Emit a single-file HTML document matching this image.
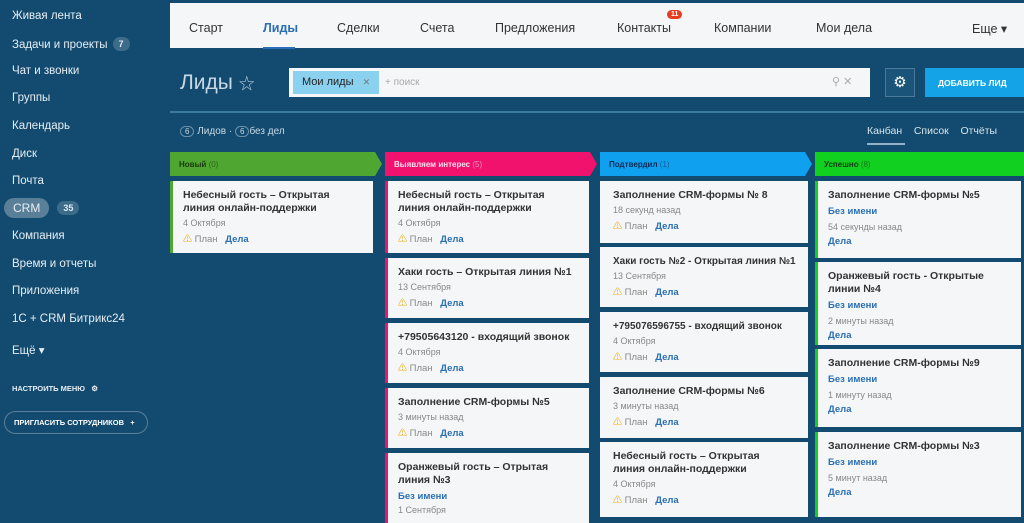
<!DOCTYPE html>
<html><head><meta charset="utf-8"><style>
*{margin:0;padding:0;box-sizing:border-box}
body{width:1024px;height:512px;overflow:hidden;background:#124b6f;font-family:"Liberation Sans","Noto Sans CJK SC",sans-serif;position:relative;color:#333}
.sb{position:absolute;left:12px;color:#e6eef4;font-size:11.5px}
.bd{display:inline-block;background:#3d6b8a;color:#dfe9f0;border-radius:9px;font-size:9px;font-weight:bold;padding:2px 6px;margin-left:5px;vertical-align:1px}
.top{position:absolute;left:170px;top:3px;width:854px;height:45px;background:#f4f6f8}
.top span{position:absolute;top:18px;font-size:12.5px;color:#333}
.hdr{position:absolute;top:152px;height:24px;font-size:8px;font-weight:bold;padding:8px 0 0 9px;color:#1a3a10}
.hdr i{font-style:normal;font-weight:normal;opacity:.6}
.c{position:absolute;background:#f5f6f7;border-left:3px solid;padding:8px 10px 0 10px;font-size:10.5px;overflow:hidden}
.c b{display:block;font-weight:bold;color:#333;line-height:13px}
.c .d{font-size:9px;color:#888;margin-top:3px}
.c .p{font-size:9.5px;color:#888;margin-top:4px}
.c .p em{font-style:normal;color:#f0b020;font-size:9px}
.c .p a,.c .l{color:#2a6fb5;font-weight:bold;margin-left:5px}
.c .l{display:block;margin:4px 0 0 0;font-size:9.5px}
.g .d{margin-top:5px}
.t{white-space:nowrap}
</style></head><body>
<div class="sb" style="top:10px">Живая лента</div>
<div class="sb" style="top:37px">Задачи и проекты<span class="bd">7</span></div>
<div class="sb" style="top:65px">Чат и звонки</div>
<div class="sb" style="top:92px">Группы</div>
<div class="sb" style="top:120px">Календарь</div>
<div class="sb" style="top:148px">Диск</div>
<div class="sb" style="top:175px">Почта</div>
<div class="sb" style="top:201px;left:4px"><span style="background:#5a7f98;border-radius:12px;padding:3px 9px;font-size:12px">CRM</span><span class="bd" style="margin-left:8px">35</span></div>
<div class="sb" style="top:230px">Компания</div>
<div class="sb" style="top:258px">Время и отчеты</div>
<div class="sb" style="top:285px">Приложения</div>
<div class="sb" style="top:313px">1С + CRM Битрикс24</div>
<div class="sb" style="top:343px">Ещё ▾</div>
<div class="sb" style="top:384px;font-size:7.5px;font-weight:bold">НАСТРОИТЬ МЕНЮ &nbsp;&nbsp;⚙</div>
<div style="position:absolute;left:4px;top:411px;width:144px;height:23px;border:1px solid #5a7f98;border-radius:12px;color:#fff;font-size:7.5px;font-weight:bold;padding:6px 0 0 9px">ПРИГЛАСИТЬ СОТРУДНИКОВ &nbsp;&nbsp;+</div>

<div class="top">
<span style="left:19px">Старт</span>
<span style="left:93px;color:#2a6fb5;font-weight:bold">Лиды</span>
<div style="position:absolute;left:93px;top:44px;width:32px;height:2px;background:#2a6fb5"></div>
<span style="left:167px">Сделки</span>
<span style="left:250px">Счета</span>
<span style="left:325px">Предложения</span>
<span style="left:447px">Контакты</span>
<div style="position:absolute;left:497px;top:7px;background:#e63b1f;color:#fff;font-size:7px;border-radius:6px;padding:1px 4px;font-weight:bold">11</div>
<span style="left:544px">Компании</span>
<span style="left:646px">Мои дела</span>
<span style="left:802px">Еще ▾</span>
</div>

<div style="position:absolute;left:180px;top:70px;font-size:21px;color:#c9d9e4;font-weight:300">Лиды <span style="font-size:16px">☆</span></div>
<div style="position:absolute;left:289px;top:68px;width:581px;height:29px;background:#f4f6f8"></div>
<div style="position:absolute;left:293px;top:71px;width:86px;height:23px;background:#8ad1f0;font-size:11px;padding:5px 0 0 9px;color:#222">Мои лиды <span style="color:#777;font-size:9px;margin-left:6px">✕</span></div>
<div style="position:absolute;left:385px;top:77px;font-size:10px;color:#aaa">+ поиск</div>
<div style="position:absolute;left:832px;top:75px;font-size:11px;color:#aaa">⚲ ✕</div>
<div style="position:absolute;left:885px;top:68px;width:30px;height:29px;border:1px solid #4a7898;background:#1b5479;color:#fff;font-size:15px;text-align:center;line-height:27px">⚙</div>
<div style="position:absolute;left:925px;top:68px;width:99px;height:29px;background:#15a3e8;color:#fff;font-size:8.5px;font-weight:bold;padding:10px 0 0 13px">ДОБАВИТЬ ЛИД</div>
<div style="position:absolute;left:170px;top:111px;width:854px;height:2px;background:#3a7aa0"></div>
<div style="position:absolute;left:180px;top:126px;font-size:10px;color:#c9d9e4"><span style="border:1px solid #6a92ad;border-radius:8px;padding:0 4px;font-size:8px">6</span> Лидов · <span style="border:1px solid #6a92ad;border-radius:8px;padding:0 4px;font-size:8px">6</span>без дел</div>
<div style="position:absolute;left:867px;top:125px;font-size:10.5px;color:#d7e4ec">Канбан &nbsp;&nbsp;&nbsp;Список &nbsp;&nbsp;&nbsp;Отчёты</div>
<div style="position:absolute;left:867px;top:143px;width:38px;height:2px;background:#8fb3ca"></div>

<svg style="position:absolute;left:0;top:0" width="1024" height="512">
<polygon points="170,152 375,152 382,164 375,176 170,176" fill="#4fa630"/>
<polygon points="385,152 590,152 597,164 590,176 385,176" fill="#f0126c"/>
<polygon points="600,152 805,152 812,164 805,176 600,176" fill="#10a0f0"/>
<polygon points="815,152 1024,152 1024,176 815,176" fill="#12d020"/>
</svg>
<div class="hdr" style="left:170px">Новый <i>(0)</i></div>
<div class="hdr" style="left:385px;color:#fde">Выявляем интерес <i>(5)</i></div>
<div class="hdr" style="left:600px;color:#0b2d55">Подтвердил <i>(1)</i></div>
<div class="hdr" style="left:815px;color:#0d3a12">Успешно <i>(8)</i></div>

<div class="c" style="left:170px;top:181px;width:203px;height:72px;border-color:#4fa630"><b>Небесный гость – Открытая<br>линия онлайн-поддержки</b><div class="d">4 Октября</div><div class="p"><em>⚠</em> План <a>Дела</a></div></div>

<div class="c" style="left:385px;top:181px;width:204px;height:72px;border-color:#f0126c"><b>Небесный гость – Открытая<br>линия онлайн-поддержки</b><div class="d">4 Октября</div><div class="p"><em>⚠</em> План <a>Дела</a></div></div>
<div class="c" style="left:385px;top:258px;width:204px;height:60px;border-color:#f0126c"><b>Хаки гость – Открытая линия №1</b><div class="d">13 Сентября</div><div class="p"><em>⚠</em> План <a>Дела</a></div></div>
<div class="c" style="left:385px;top:323px;width:204px;height:60px;border-color:#f0126c"><b>+79505643120 - входящий звонок</b><div class="d">4 Октября</div><div class="p"><em>⚠</em> План <a>Дела</a></div></div>
<div class="c" style="left:385px;top:388px;width:204px;height:60px;border-color:#f0126c"><b>Заполнение CRM-формы №5</b><div class="d">3 минуты назад</div><div class="p"><em>⚠</em> План <a>Дела</a></div></div>
<div class="c" style="left:385px;top:453px;width:204px;height:70px;border-color:#f0126c"><b>Оранжевый гость – Отрытая<br>линия №3</b><span class="l">Без имени</span><div class="d">1 Сентября</div></div>

<div class="c" style="left:600px;top:181px;width:208px;height:62px;border-color:#f5f6f7"><b>Заполнение CRM-формы № 8</b><div class="d">18 секунд назад</div><div class="p"><em>⚠</em> План <a>Дела</a></div></div>
<div class="c" style="left:600px;top:247px;width:208px;height:60px;border-color:#f5f6f7;padding-right:2px"><b class="t" style="font-size:10px">Хаки гость №2 - Открытая линия №1</b><div class="d">13 Сентября</div><div class="p"><em>⚠</em> План <a>Дела</a></div></div>
<div class="c" style="left:600px;top:312px;width:208px;height:60px;border-color:#f5f6f7"><b class="t" style="font-size:10px">+795076596755 - входящий звонок</b><div class="d">4 Октября</div><div class="p"><em>⚠</em> План <a>Дела</a></div></div>
<div class="c" style="left:600px;top:377px;width:208px;height:61px;border-color:#f5f6f7"><b>Заполнение CRM-формы №6</b><div class="d">3 минуты назад</div><div class="p"><em>⚠</em> План <a>Дела</a></div></div>
<div class="c" style="left:600px;top:442px;width:208px;height:75px;border-color:#f5f6f7"><b>Небесный гость – Открытая<br>линия онлайн-поддержки</b><div class="d">4 Октября</div><div class="p"><em>⚠</em> План <a>Дела</a></div></div>

<div class="c g" style="left:815px;top:181px;width:206px;height:77px;border-color:#12d020"><b>Заполнение CRM-формы №5</b><span class="l">Без имени</span><div class="d">54 секунды назад</div><span class="l">Дела</span></div>
<div class="c g" style="left:815px;top:262px;width:206px;height:83px;border-color:#12d020"><b>Оранжевый гость - Открытые<br>линии №4</b><span class="l">Без имени</span><div class="d">2 минуты назад</div><span class="l">Дела</span></div>
<div class="c g" style="left:815px;top:349px;width:206px;height:78px;border-color:#12d020"><b>Заполнение CRM-формы №9</b><span class="l">Без имени</span><div class="d">1 минуту назад</div><span class="l">Дела</span></div>
<div class="c g" style="left:815px;top:432px;width:206px;height:85px;border-color:#12d020"><b>Заполнение CRM-формы №3</b><span class="l">Без имени</span><div class="d">5 минут назад</div><span class="l">Дела</span></div>
</body></html>
